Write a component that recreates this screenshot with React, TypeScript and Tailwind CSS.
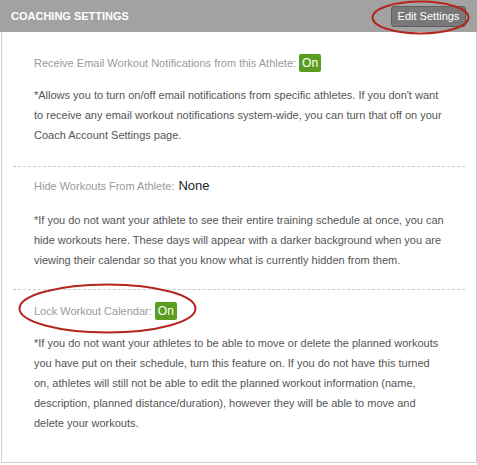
import React from "react";

const Badge = () => (
  <span className="ml-[3px] inline-flex h-[18px] items-center rounded-[2px] bg-[#5b9e1f] px-[3px] text-[12px] leading-none text-white">
    On
  </span>
);

export default function App() {
  return (
    <div
      className="relative w-[477px] bg-white"
      style={{ fontFamily: '"Liberation Sans", Arial, sans-serif' }}
    >
      <div className="flex h-[32px] items-center justify-between bg-[#a2a2a2] pl-[11px] pr-[11px]">
        <span className="text-[11px] font-bold text-white">COACHING SETTINGS</span>
        <button className="flex h-[21px] w-[75px] items-center justify-center rounded-[3px] border border-[#5e5e5e] bg-[#787878] text-[11px] text-white">
          Edit Settings
        </button>
      </div>
      <div className="ml-[1px] w-[476px] border-x border-b border-[#cfcfcf] px-[11px] pt-[21px] pb-[29px]">
        <div className="border-b border-dashed border-[#cccccc] pl-[21px] pb-[21px]">
          <div className="flex h-5 items-center text-[11px] text-[#9a9a9a]">
            Receive Email Workout Notifications from this Athlete: <Badge />
          </div>
          <p className="mt-3 w-[412px] text-[11px] leading-[20px] text-[#555555]">
            *Allows you to turn on/off email notifications from specific athletes. If you don't want to receive any email workout notifications system-wide, you can turn that off on your Coach Account Settings page.
          </p>
        </div>
        <div className="border-b border-dashed border-[#cccccc] pl-[21px] pt-[9px] pb-[19px]">
          <div className="flex h-5 items-center text-[11px] text-[#9a9a9a]">
            Hide Workouts From Athlete:
            <span className="ml-[4px] text-[13px] text-[#222222]">None</span>
          </div>
          <p className="mt-[14px] w-[412px] text-[11px] leading-[20px] text-[#555555]">
            *If you do not want your athlete to see their entire training schedule at once, you can hide workouts here. These days will appear with a darker background when you are viewing their calendar so that you know what is currently hidden from them.
          </p>
        </div>
        <div className="pl-[21px] pt-[11px]">
          <div className="flex h-5 items-center text-[11px] text-[#9a9a9a]">
            Lock Workout Calendar: <Badge />
          </div>
          <p className="mt-3 w-[412px] text-[11px] leading-[20px] text-[#555555]">
            *If you do not want your athletes to be able to move or delete the planned workouts you have put on their schedule, turn this feature on. If you do not have this turned on, athletes will still not be able to edit the planned workout information (name, description, planned distance/duration), however they will be able to move and delete your workouts.
          </p>
        </div>
      </div>
      <svg className="pointer-events-none absolute left-0 top-0" width="477" height="465">
        <ellipse cx="420.5" cy="17.5" rx="48" ry="16" fill="none" stroke="#b3261e" strokeWidth="2" />
        <ellipse cx="107.5" cy="308.5" rx="88" ry="24" fill="none" stroke="#b3261e" strokeWidth="2" />
      </svg>
    </div>
  );
}
